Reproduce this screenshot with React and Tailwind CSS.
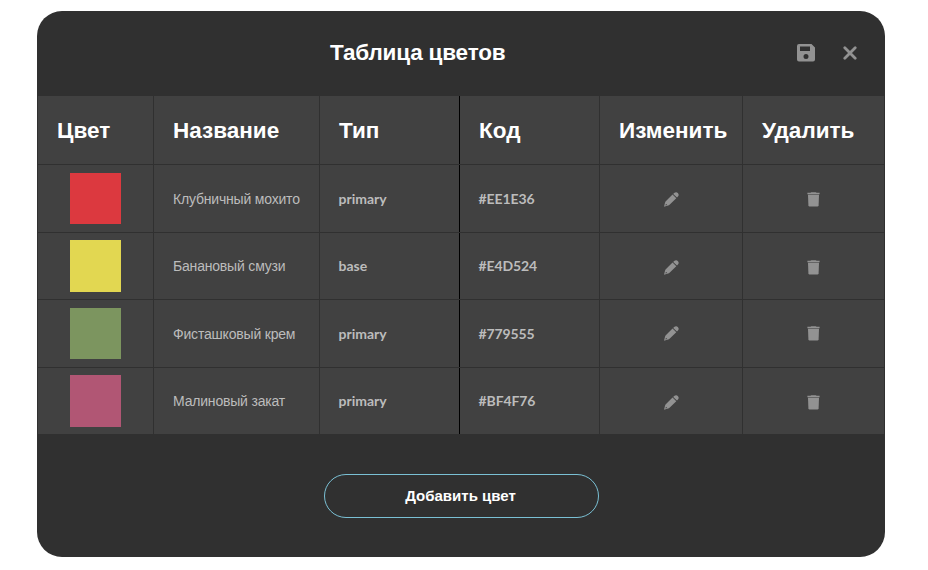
const rows = [
  { name: "Клубничный мохито", type: "primary", code: "#EE1E36", fill: "bg-[#dc393f]", size: "h-[68px] border-b", box: "mt-2 h-[51px]", text: "pt-[1px]", latin: "pb-[1px]", icons: "pt-[1px]" },
  { name: "Банановый смузи", type: "base", code: "#E4D524", fill: "bg-[#e2d751]", size: "h-[67px] border-b", box: "mt-[7px] h-[52px]", text: "", latin: "pb-[2px]", icons: "pt-[2px]" },
  { name: "Фисташковый крем", type: "primary", code: "#779555", fill: "bg-[#7c955f]", size: "h-[68px] border-b", box: "mt-2 h-[51px]", text: "pt-[1px]", latin: "pb-[1px]", icons: "" },
  { name: "Малиновый закат", type: "primary", code: "#BF4F76", fill: "bg-[#b15674]", size: "h-[66px]", box: "mt-[7px] h-[52px]", text: "", latin: "pb-[2px]", icons: "pt-[2px]" },
];

const columns = "grid grid-cols-[116px_166px_140px_140px_143px_143px] border-[#303030]";
const line = "border-l border-[#303030]";
const blackLine = "border-l border-black";

function SaveIcon() {
  return (
    <svg width="18" height="18" viewBox="0 0 18 18" fill="currentColor">
      <path fillRule="evenodd" d="M2 0H14.5L18 3.5V15.5A2 2 0 0 1 16 17.5H2A2 2 0 0 1 0 15.5V2A2 2 0 0 1 2 0ZM3 2.5V7H13V2.5ZM9 10A2.5 2.5 0 1 0 9 15A2.5 2.5 0 1 0 9 10Z" />
    </svg>
  );
}

function CloseIcon() {
  return (
    <svg width="14" height="14" viewBox="0 0 14 14" fill="none" stroke="currentColor" strokeWidth="2.8" strokeLinecap="round">
      <path d="M1.8 1.8L12.2 12.2M12.2 1.8L1.8 12.2" />
    </svg>
  );
}

function PencilIcon() {
  return (
    <svg width="15" height="15" viewBox="0 0 15 15" fill="currentColor">
      <path d="M10.1 1.1Q12.1 -0.7 13.8 0.9Q15.5 2.6 13.9 4.6L13 5.5L9.2 1.9Z" />
      <path fillRule="evenodd" d="M8.5 2.6L12.3 6.2L5.8 12.5Q5 13.3 4.1 13.6L0 14.7L1 10.7Q1.3 9.7 2 9ZM1.9 11.9L1.5 13.4L3 12.9Q2.9 12 1.9 11.9Z" />
    </svg>
  );
}

function TrashIcon() {
  return (
    <svg width="13" height="15" viewBox="0 0 13 15" fill="currentColor">
      <path d="M0.4 0.8H3.4L4.2 0.2H8.8L9.6 0.8H12.6V2.3H0.4Z" />
      <path d="M1 2.7H12L11.6 13.2Q11.5 14.4 10.4 14.4H2.6Q1.5 14.4 1.4 13.2Z" />
    </svg>
  );
}

export default function App() {
  return (
    <div className="h-[570px] w-[928px] bg-white pl-[37px] pt-[11px] font-['Liberation_Sans',sans-serif]">
      <section className="flex h-[546px] w-[848px] flex-col overflow-hidden rounded-[25px] bg-[#303030]">
        <header className="flex h-[85px] items-center justify-between pb-[2px] pl-[293px] pr-7">
          <h1 className="pt-[1px] text-[22.5px] font-bold tracking-[-0.18px] text-white">Таблица цветов</h1>
          <div className="flex items-center gap-7 text-[#929292]">
            <button aria-label="Сохранить"><SaveIcon /></button>
            <button aria-label="Закрыть"><CloseIcon /></button>
          </div>
        </header>

        <div className="h-[338px] border-r border-[#303030] bg-[#414141]">
          <div className={`${columns} h-[69px] w-[848px] items-stretch border-b text-[22.5px] font-bold text-white`}>
            <div className={`${line} flex items-center pl-[19px] pt-[2px]`}>Цвет</div>
            <div className={`${line} flex items-center pl-[19px] pt-[2px]`}>Название</div>
            <div className={`${line} flex items-center pl-[19px] pt-[2px]`}>Тип</div>
            <div className={`${blackLine} flex items-center pl-[19px] pt-[2px]`}>Код</div>
            <div className={`${line} flex items-center pl-[19px] pt-[2px]`}>Изменить</div>
            <div className={`${line} flex items-center pl-[19px] pt-[2px]`}>Удалить</div>
          </div>
          {rows.map((row) => (
            <div key={row.code} className={`${columns} ${row.size} w-[848px] text-[14px] text-[#bcbcbc]`}>
              <div className={`${line} pl-8`}>
                <div className={`${row.box} ${row.fill} w-[51px]`} />
              </div>
              <div className={`${line} ${row.text} flex items-center whitespace-nowrap pl-[19px] tracking-[-0.19px]`}>{row.name}</div>
              <div className={`${line} ${row.latin} flex items-center pl-[18.5px] font-['Lato',sans-serif] font-bold`}>{row.type}</div>
              <div className={`${blackLine} ${row.latin} flex items-center pl-[18.5px] font-['Lato',sans-serif] font-bold tracking-[-0.1px]`}>{row.code}</div>
              <div className={`${line} ${row.icons} flex items-center justify-center text-[#929292]`}>
                <button aria-label="Изменить"><PencilIcon /></button>
              </div>
              <div className={`${line} ${row.icons} flex items-center justify-center pr-[2px] text-[#929292]`}>
                <button aria-label="Удалить"><TrashIcon /></button>
              </div>
            </div>
          ))}
        </div>

        <footer className="flex justify-center pl-[1px] pt-10">
          <button className="h-11 w-[275px] rounded-full border border-[#7ac0d4] pr-[2px] text-[15px] font-bold text-white">
            Добавить цвет
          </button>
        </footer>
      </section>
    </div>
  );
}
